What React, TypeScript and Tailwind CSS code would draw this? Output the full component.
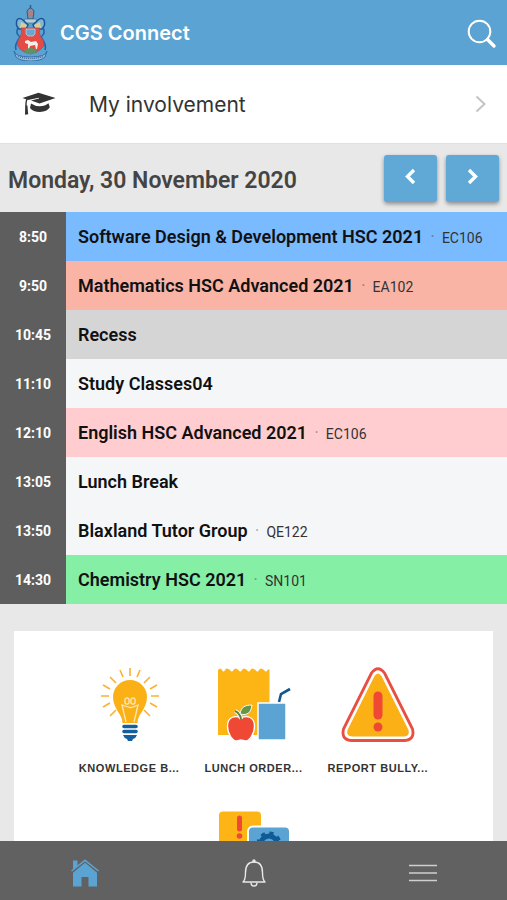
import React from 'react';

interface Lesson {
  time: string;
  name: string;
  room?: string;
  color: string;
}

const lessons: Lesson[] = [
  { time: '8:50', name: 'Software Design & Development HSC 2021', room: 'EC106', color: 'bg-[#7abaff]' },
  { time: '9:50', name: 'Mathematics HSC Advanced 2021', room: 'EA102', color: 'bg-[#fab4a6]' },
  { time: '10:45', name: 'Recess', color: 'bg-[#d5d5d5]' },
  { time: '11:10', name: 'Study Classes04', color: 'bg-[#f5f6f8]' },
  { time: '12:10', name: 'English HSC Advanced 2021', room: 'EC106', color: 'bg-[#ffcdcf]' },
  { time: '13:05', name: 'Lunch Break', color: 'bg-[#f5f6f8]' },
  { time: '13:50', name: 'Blaxland Tutor Group', room: 'QE122', color: 'bg-[#f5f6f8]' },
  { time: '14:30', name: 'Chemistry HSC 2021', room: 'SN101', color: 'bg-[#86efa6]' },
];

const tiles = [
  { id: 'knowledge', label: 'Knowledge B...', icon: <BulbIcon /> },
  { id: 'lunch', label: 'Lunch Order...', icon: <LunchIcon /> },
  { id: 'bullying', label: 'Report Bully...', icon: <WarningIcon /> },
  { id: 'support', label: '', icon: <SupportIcon /> },
];

export default function App() {
  return (
    <div className="flex h-screen flex-col bg-[#e8e8e8] font-['Roboto',sans-serif]">
      <header className="flex h-[65px] shrink-0 items-center bg-[#5ba3d3] pl-3 pr-[6px]">
        <Crest />
        <h1 className="ml-[11px] flex-1 font-['Inter',sans-serif] text-[20px] font-semibold text-white">CGS Connect</h1>
        <button type="button" aria-label="Search" className="p-1 pt-[6px]">
          <svg viewBox="0 0 30 30" className="size-[30px]" fill="none" stroke="#fff" strokeLinecap="round">
            <circle cx="12.500" cy="12.500" r="10.800" strokeWidth="2" />
            <path d="M20.500 20.500 27 27" strokeWidth="3.400" />
          </svg>
        </button>
      </header>

      <main className="min-h-0 flex-1 overflow-y-auto [scrollbar-width:none]">
        <a href="#involvement" className="flex h-[79px] items-center border-b border-[#e0e0e0] bg-white pl-[22px] pr-5">
          <CapIcon />
          <span className="ml-[33px] flex-1 pt-px font-['Inter',sans-serif] text-[21px] text-[#333]">My involvement</span>
          <svg viewBox="0 0 12 18" className="h-[18px] w-3" fill="none" stroke="#c4c4c6" strokeWidth="2">
            <path d="M1.500 1.500 9.500 9 1.500 16.500" />
          </svg>
        </a>

        <section>
          <div className="flex h-[68px] items-center justify-between px-2">
            <h2 className="pt-[6px] text-[23px] font-semibold text-[#444]">Monday, 30 November 2020</h2>
            <div className="flex gap-[9px]">
              <DayButton label="Previous day" path="M10 2 3.500 8.500 10 15" />
              <DayButton label="Next day" path="M3 2 9.500 8.500 3 15" />
            </div>
          </div>

          <table className="w-full table-fixed border-collapse">
            <tbody>
              {lessons.map((lesson) => (
                <LessonRow key={lesson.time} lesson={lesson} />
              ))}
            </tbody>
          </table>
        </section>

        <section className="mx-[14px] mt-[27px] mb-6 flex flex-wrap justify-center bg-white pt-8 pr-[53px] pl-[53px]">
          {tiles.map((tile) => (
            <a key={tile.id} href={`#${tile.id}`} className="flex h-36 w-1/3 flex-col items-center">
              {tile.icon}
              <span className="mt-[17px] whitespace-nowrap font-['Liberation_Sans',sans-serif] text-[11px] leading-4 font-bold tracking-wider text-[#333] uppercase">
                {tile.label}
              </span>
            </a>
          ))}
        </section>
      </main>

      <nav className="grid h-[59px] shrink-0 grid-cols-3 bg-[#616161]">
        <a href="#home" aria-label="Home" className="flex items-center justify-center pt-1">
          <svg viewBox="0 0 28 28" className="size-7" fill="#5ba3d3">
            <path d="M2 1.500h4.500v6L2 11z" />
            <path d="M2 13.500 14 3 26 13.500v14h-8.500v-9.500h-7v9.500H2z" />
            <path d="M.5 13.500 14 2.500 27.500 13.500" fill="none" stroke="#616161" strokeWidth="1.800" />
            <path d="M.5 12 14 1.300 27.500 12" fill="none" stroke="#5ba3d3" strokeWidth="1.500" />
          </svg>
        </a>
        <a href="#notices" aria-label="Notifications" className="flex items-center justify-center pt-1">
          <svg viewBox="0 0 26 30" className="h-[30px] w-[26px]" fill="none" stroke="#e8e8e8" strokeWidth="1.400">
            <path d="M2 24c2.500-2 2.500-5 2.500-9.500C4.500 7.500 8 4 13 4s8.500 3.500 8.500 10.500c0 4.500 0 7.500 2.500 9.500z" strokeLinejoin="round" />
            <path d="M10 24.500c0 4.700 6 4.700 6 0" />
            <circle cx="13" cy="3" r="1" fill="#e8e8e8" />
          </svg>
        </a>
        <button type="button" aria-label="Menu" className="flex items-center justify-center pt-1">
          <svg viewBox="0 0 28 18" className="h-[18px] w-7" fill="none" stroke="#cfcfcf" strokeWidth="1.500">
            <path d="M0 1.500h28M0 9h28M0 16.500h28" />
          </svg>
        </button>
      </nav>
    </div>
  );
}

function DayButton({ label, path }: { label: string; path: string }) {
  return (
    <button
      type="button"
      aria-label={label}
      className="flex h-[47px] w-[53px] items-center justify-center rounded-[3px] bg-[#60a8d6] pb-1 shadow-[0_2px_4px_rgba(0,0,0,0.4)]"
    >
      <svg viewBox="0 0 13 17" className="h-[17px] w-[13px]" fill="none" stroke="#fff" strokeWidth="3.400">
        <path d={path} />
      </svg>
    </button>
  );
}

function LessonRow({ lesson }: { lesson: Lesson }) {
  return (
    <tr className="h-[49px]">
      <th scope="row" className="w-[66px] bg-[#5e5e5e] p-0 pt-[2px] text-center text-[14px] font-bold text-white">
        {lesson.time}
      </th>
      <td className={`${lesson.color} whitespace-nowrap p-0 pl-3 text-[#111]`}>
        <span className="text-[18px] font-semibold">{lesson.name}</span>
        {lesson.room && (
          <>
            <span className="px-[7px] text-[18px] text-black/30">·</span>
            <span className="text-[14px] text-[#333]">{lesson.room}</span>
          </>
        )}
      </td>
    </tr>
  );
}

function CapIcon() {
  return (
    <svg viewBox="0 0 34 24" className="h-6 w-[34px]" fill="#333" aria-hidden="true">
      <path d="M.5 6 16.500.8 33.500 6 17.500 11.500 9 8.600 17 6.500 16.800 5.800 6 8z" />
      <path d="M5 7.200q-1.200 2-1 7" fill="none" stroke="#333" strokeWidth="1.300" />
      <path d="M3.200 13.500h2.200l.8 8.800-3.200.5z" />
      <path d="M9 11.500q4 2.800 9 2.800t8.500-3l1.300 4q-2.800 4.500-9.800 4.700Q11 20 8 16z" />
    </svg>
  );
}

function Crest() {
  return (
    <svg viewBox="0 0 37 56" className="h-14 w-[37px]" aria-hidden="true">
      <path d="M18.500 0v6" stroke="#31588c" strokeWidth="1.500" />
      <path d="M15 6q3.500-6 7 0l-1 8h-5z" fill="#87919f" stroke="#355783" />
      <path d="M16 7h5M16 10h5" stroke="#d06f68" />
      <path d="M13 14h11l2 4H11z" fill="#b4ced2" stroke="#456b91" strokeWidth=".7" />
      <path d="M5 15q2-3 6 0l5 5-2 4H7q-4-4-2-9M32 15q-2-3-6 0l-5 5 2 4h7q4-4 2-9" fill="#83b6d3" stroke="#19539b" strokeWidth="1.500" />
      <path d="M9 17l6 3-2 4-5-1zM28 17l-6 3 2 4 5-1z" fill="#d8cf91" />
      <path d="M6 23Q3 28 8 32q-6 8-4 13M31 23q3 5-2 9 6 8 4 13" fill="none" stroke="#2362a6" strokeWidth="1.600" />
      <path d="M9 23h19q-2 5 1 9 6 8 0 12-4 4-10.500 5Q12 48 8 44q-5-5 0-12 3-4 1-9" fill="#e54b43" stroke="#95546f" strokeWidth=".8" />
      <path d="M14 24h9v5l-2 2h-5l-2-2z" fill="#68a6d4" stroke="#c7d9dc" strokeWidth=".7" />
      <path d="M13 36l3-1 3 2 5-1 2 3-1 5h-1l-1-4-5 1-1 3h-1v-5l-3-1z" fill="#f4eee8" />
      <path d="M12 45q7-4 13 0l-2 3q-5 2-9 0z" fill="#609363" />
      <path d="M2 46q1 6 16.500 6T35 46l-2 6q-4 4-14.500 4T4 52z" fill="#8fbbdc" stroke="#2a629d" strokeWidth=".8" />
      <path d="M6 51.500q13 4 25 0" fill="none" stroke="#416b98" strokeWidth="1.200" strokeDasharray="1 1" />
    </svg>
  );
}

function BulbIcon() {
  return (
    <svg viewBox="-1 0 76 80" className="h-20 w-[76px]" aria-hidden="true">
      <path
        d="M38 5v8M28 7l3 7M48 7l-3 7M18 14l6 6M58 14l-6 6M11 22l7 4M65 22l-7 4M9 33h8M59 33h8M11 44l7-4M65 44l-7-4M18 53l6-6M58 53l-6-6"
        stroke="#f9b233"
        strokeWidth="1.600"
      />
      <path d="M30.500 60c0-9-9.500-14-9.500-26a17 17 0 0 1 34 0c0 12-9.500 17-9.500 26z" fill="#fbb116" />
      <path d="M34 59l-4-17 6 2q3 1 5 0l5-2-4 17" fill="none" stroke="#ffe7b8" strokeWidth="1.300" />
      <ellipse cx="35" cy="38" rx="2.200" ry="3.200" fill="none" stroke="#ffe7b8" strokeWidth="1.300" />
      <ellipse cx="41" cy="38" rx="2.200" ry="3.200" fill="none" stroke="#ffe7b8" strokeWidth="1.300" />
      <path d="M32 63.500h12M32 68.500h12" stroke="#145f9c" strokeWidth="3.600" strokeLinecap="round" />
      <path d="M31 72h14q-1 3-4 4l-1 2h-4l-1-2q-3-1-4-4" fill="#145f9c" />
    </svg>
  );
}

function LunchIcon() {
  return (
    <svg viewBox="-1 -1 76 80" className="h-20 w-[76px]" aria-hidden="true">
      <path d="M2 6q2.500-3 4 0 1.500 3 3 0t5 0q2 3 3.500 0t5 0q2 3 3.500 0t5 0q2 3 3.500 0t5 0q2 3 3.500 0t5 0q2 3 3.500 0l2-1v66H2z" fill="#fdb515" />
      <path d="M42 39h28v37H42z" fill="#5ba3d3" stroke="#fff" strokeWidth="1.500" />
      <path d="M63 38l2-8 9-5" fill="none" stroke="#14568f" strokeWidth="2.600" />
      <path
        d="M25 54c-6-3-13.500-1-13.500 8 0 8 5 15 9.500 15l4-1 4 1c4.500 0 9.500-7 9.500-15 0-9-7.500-11-13.500-8"
        fill="#ef4835"
        stroke="#fff"
        strokeWidth="1.300"
      />
      <path d="M25 55q-1-6-6-8" fill="none" stroke="#fff" strokeWidth="4" />
      <path d="M25 55q-1-6-6-8" fill="none" stroke="#58833e" strokeWidth="2" />
      <path d="M24 50c1-7 5-9 12-9-1 7-4 11-12 9" fill="#639946" stroke="#fff" />
    </svg>
  );
}

function WarningIcon() {
  return (
    <svg viewBox="0 -1 76 80" className="h-20 w-[76px]" aria-hidden="true">
      <path d="M31.500 9Q38 .500 44.500 9L72.500 65Q75 75.500 65 76.500H11Q1 75.500 3.500 65z" fill="#fff" stroke="#e94f40" strokeWidth="2.800" />
      <path d="M34.500 12Q38 7 41.500 12L68.500 66Q70 72 64 72.500H12Q6 72 7.500 66z" fill="#fbb116" />
      <path d="M38 32v19" stroke="#ef4835" strokeWidth="9" strokeLinecap="round" />
      <circle cx="38" cy="63" r="4.500" fill="#ef4835" />
    </svg>
  );
}

function SupportIcon() {
  return (
    <svg viewBox="-1 0 76 80" className="h-20 w-[76px]" role="img" aria-label="IT support">
      <rect x="3" y="4.500" width="42" height="44" rx="4" fill="#fdb515" />
      <path d="M23.500 11v11" stroke="#ef4835" strokeWidth="5" strokeLinecap="round" />
      <circle cx="23.500" cy="29" r="2.800" fill="#ef4835" />
      <rect x="32" y="19.500" width="42" height="44" rx="5" fill="#5ba3d3" stroke="#fff" strokeWidth="2" />
      <circle cx="53" cy="37" r="8" fill="none" stroke="#105a95" strokeWidth="5" />
      <circle cx="53" cy="37" r="10.500" fill="none" stroke="#105a95" strokeWidth="4" strokeDasharray="4 4.250" />
    </svg>
  );
}
